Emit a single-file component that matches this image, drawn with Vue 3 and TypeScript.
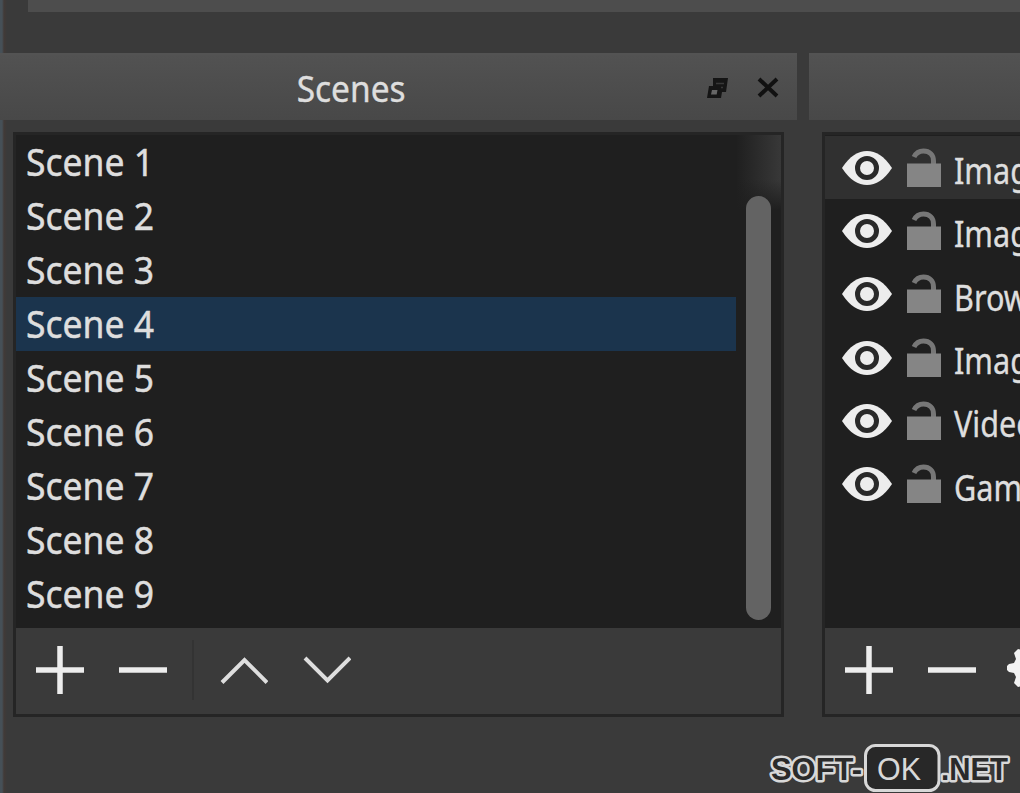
<template>
  <div class="workspace">
    <div class="workspace__preview-edge"></div>

    <div class="docks">
      <section class="dock dock--scenes">
        <header class="dock__header">
          <h2 class="dock__title">Scenes</h2>
          <div class="dock__controls">
            <svg class="dock__control" width="24" height="26" viewBox="0 0 24 26">
              <path d="M7 3h15l-2 14h-4l-1 6H1l2-12h4z" fill="#151515" />
              <path d="M10 8.500h8M15 12.500h2" stroke="#383838" stroke-width="1.500" />
              <path d="M6 15h5.500l-.8 4.500H5z" fill="#666" />
            </svg>
            <svg class="dock__control" width="24" height="26" viewBox="0 0 24 26">
              <path d="M3 4l18 17M21 4l-18 17" stroke="#111" stroke-width="4" />
            </svg>
          </div>
        </header>

        <div class="dock__body">
          <div class="scenes">
            <ul class="scenes__list">
              <li
                v-for="scene in scenes"
                :key="scene"
                class="scenes__item"
                :class="{ 'scenes__item--selected': scene === selectedScene }"
              >
                <span class="scenes__name">{{ scene }}</span>
              </li>
            </ul>
            <div class="scenes__scrollbar">
              <div class="scenes__handle"></div>
            </div>
          </div>

          <footer class="toolbar">
            <svg class="toolbar__icon" width="50" height="50" viewBox="0 0 50 50">
              <path d="M1 25h48M25 1v48" />
            </svg>
            <svg class="toolbar__icon" width="50" height="50" viewBox="0 0 50 50">
              <path d="M1 25h48" />
            </svg>
            <span class="toolbar__separator"></span>
            <svg class="toolbar__icon toolbar__icon--thin" width="50" height="50" viewBox="0 0 50 50">
              <path d="M4 37.500L26.500 15L49 37.500" />
            </svg>
            <svg class="toolbar__icon toolbar__icon--thin" width="50" height="50" viewBox="0 0 50 50">
              <path d="M4 13L26.500 35.500L49 13" />
            </svg>
          </footer>
        </div>
      </section>

      <section class="dock dock--sources">
        <header class="dock__header"></header>

        <div class="dock__body">
          <ul class="sources">
            <li
              v-for="(source, index) in sources"
              :key="index"
              class="sources__item"
              :class="{ 'sources__item--selected': index === 0 }"
            >
              <svg class="sources__eye" width="50" height="36" viewBox="0 0 50 36">
                <path d="M0 18C8 6 16 1 25 1s17 5 25 17C42 30 34 35 25 35S8 30 0 18z" fill="#ededed" />
                <circle cx="25" cy="18" r="9.500" fill="#ededed" stroke="#292929" stroke-width="5" />
              </svg>
              <svg class="sources__lock" width="34" height="40" viewBox="0 0 34 40">
                <path d="M7 9C9 5 12 3 16.500 3c6 0 10 4 10 10v4" fill="none" stroke="#777" stroke-width="5" />
                <path d="M0 15.500h34V39H0z" fill="#858585" />
              </svg>
              <span class="sources__name">{{ source }}</span>
            </li>
          </ul>

          <footer class="toolbar">
            <svg class="toolbar__icon" width="50" height="50" viewBox="0 0 50 50">
              <path d="M1 25h48M25 1v48" />
            </svg>
            <svg class="toolbar__icon" width="50" height="50" viewBox="0 0 50 50">
              <path d="M1 25h48" />
            </svg>
            <svg class="toolbar__gear" width="42" height="42" viewBox="0 0 42 42">
              <path
                d="M18 0h6l2 5 5-3 6 6-2 6 1 2 5 2v6l-5 2-1 2 2 6-6 6-5-3-2 5h-6l-2-5-5 1-4-4 2-6-2-4-5-1-2-2v-4l2-2 5-1 2-4-2-6 4-4 5 1z"
                fill="#f2f2f2"
              />
              <circle cx="21" cy="21" r="6" fill="#3a3a3a" />
            </svg>
          </footer>
        </div>
      </section>
    </div>

    <svg class="watermark" width="252" height="53" viewBox="0 0 252 53">
      <text class="watermark__outline" x="3" y="38.500" textLength="91" lengthAdjust="spacingAndGlyphs">SOFT-</text>
      <text class="watermark__outline" x="173" y="38.500" textLength="67" lengthAdjust="spacingAndGlyphs">.NET</text>
      <rect x="97.500" y="4.500" width="73.500" height="45" rx="10" fill="#282828" stroke="#d8d8d8" stroke-width="3" />
      <text class="watermark__ok" x="109" y="38.500" textLength="44" lengthAdjust="spacingAndGlyphs">OK</text>
    </svg>
  </div>
</template>

<script setup lang="ts">
import { ref } from 'vue';

const scenes: string[] = Array.from({ length: 9 }, (_, i) => `Scene ${i + 1}`);
const selectedScene = ref('Scene 4');

const sources: string[] = ['Image', 'Image', 'Browser', 'Image', 'Video', 'Game'];
</script>

<style>
body {
  margin: 0;
  background: #3a3a3a;
}
</style>

<style scoped>
.workspace {
  position: relative;
  box-sizing: border-box;
  width: 1020px;
  height: 793px;
  overflow: hidden;
  background: linear-gradient(90deg, #465057 0 2px, #423a37 4px, #3a3a3a 7px);
  color: #dedede;
  font-family: "Noto Sans", "Open Sans", sans-serif;
}

.workspace__preview-edge {
  height: 12px;
  margin: 0 0 41px 28px;
  background: #4d4d4d;
}

.docks {
  display: flex;
  gap: 12px;
}

.dock {
  flex: none;
}

.dock--scenes {
  width: 797px;
}

.dock--sources {
  width: 420px;
}

.dock__header {
  box-sizing: border-box;
  display: flex;
  align-items: center;
  height: 67px;
  border-top: 2px solid #535353;
  background: linear-gradient(#525252, #484848);
}

.dock__title {
  flex: 1;
  margin: 0;
  padding: 1px 4px 0 0;
  font-size: 36px;
  font-weight: 400;
  line-height: 61px;
  text-align: center;
  transform: scaleX(0.93);
  -webkit-text-stroke: 0.4px #dedede;
}

.dock__controls {
  display: flex;
  gap: 26px;
  margin: 0 17px 0 0;
}

.dock__control {
  display: block;
}

.dock__body {
  box-sizing: border-box;
  height: 585px;
  margin: 12px 13px 0;
  border: 3px solid #252525;
  background: #3a3a3a;
}

.scenes {
  display: flex;
  height: 493px;
  background: #1f1f1f;
}

.scenes__list {
  flex: none;
  width: 720px;
  margin: 0;
  padding: 0;
  list-style: none;
}

.scenes__item {
  height: 54px;
  padding-left: 10px;
  font-size: 39px;
  line-height: 52px;
}

.scenes__item--selected {
  background: #1b344d;
}

.scenes__name {
  display: inline-block;
  transform: scaleX(0.91);
  transform-origin: left;
  -webkit-text-stroke: 0.5px #dedede;
}

.scenes__scrollbar {
  box-sizing: border-box;
  flex: 1;
  padding: 61px 10px 8px;
  background:
    linear-gradient(transparent 45px, #1f1f1f 75px) top / 100% 100% no-repeat,
    linear-gradient(90deg, #1f1f1f, #383838) top / 100% 75px no-repeat;
}

.scenes__handle {
  height: 424px;
  border-radius: 13px;
  background: #636363;
}

.toolbar {
  display: flex;
  align-items: center;
  gap: 33px;
  height: 84px;
  padding-left: 19px;
}

.toolbar__icon {
  flex: none;
  fill: none;
  stroke: #ededed;
  stroke-width: 5.500;
}

.toolbar__icon--thin {
  stroke: #dedede;
  stroke-width: 4;
}

.toolbar__separator {
  width: 2px;
  height: 60px;
  margin: 0 -9px 0 -9px;
  background: #333;
}

.toolbar__gear {
  flex: none;
  margin-left: -3px;
}

.sources {
  height: 493px;
  margin: 0;
  padding: 1px 0 0;
  box-sizing: border-box;
  background: #1f1f1f;
  list-style: none;
}

.sources__item {
  display: flex;
  align-items: center;
  height: 63.300px;
  padding-left: 17px;
}

.sources__item--selected {
  background: #303030;
}

.sources__eye {
  flex: none;
  margin-right: 15px;
}

.sources__lock {
  flex: none;
  margin-right: 13px;
}

.sources__name {
  padding-top: 6px;
  font-size: 36px;
  line-height: 57px;
  transform: scaleX(0.85);
  transform-origin: left;
  -webkit-text-stroke: 0.4px #dedede;
}

.watermark {
  position: absolute;
  top: 741px;
  left: 768px;
  font-family: "Liberation Sans", Arial, sans-serif;
}

.watermark__outline {
  fill: #2a2a2a;
  stroke: #d8d8d8;
  stroke-width: 5px;
  stroke-linejoin: round;
  paint-order: stroke;
  font-size: 31px;
  font-weight: 700;
}

.watermark__ok {
  fill: #d8d8d8;
  font-size: 31px;
}
</style>
